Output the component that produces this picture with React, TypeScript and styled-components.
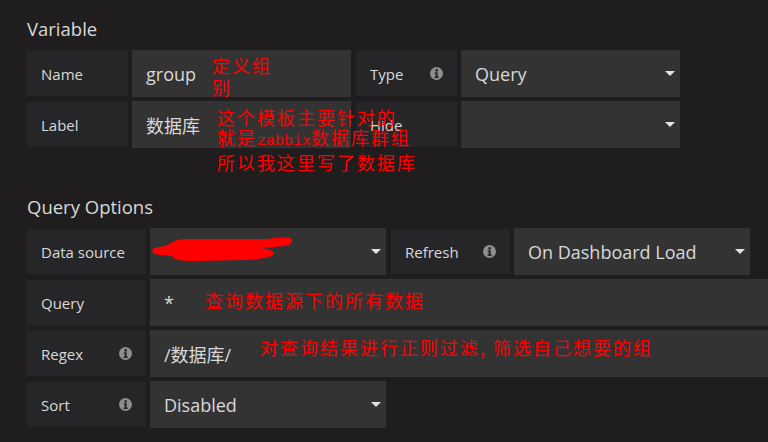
import React from "react";
import styled, { createGlobalStyle } from "styled-components";

const GlobalStyle = createGlobalStyle`
  body {
    margin: 0;
    background: #1f1d1d;
    font-family: "Open Sans", "Noto Sans CJK SC", sans-serif;
    overflow: hidden;
  }
`

const InfoIcon = () => (
  <svg width="13" height="13" viewBox="0 0 13 13">
    <circle cx="6.5" cy="6.5" r="6.5" fill="#8e8e8e" />
    <circle cx="6.7" cy="3.4" r="1.3" fill="#262628" />
    <path d="M4.6 5.3h3.1v4.3h1v1.3H4.6V9.6h1V6.6h-1z" fill="#262628" />
  </svg>
);

const Scribble = () => (
  <ScribbleSvg width="150" height="40" viewBox="0 0 150 40">
    <path
      d="M3 21 C1 24 4 27 10 27 L22 28 C24 32 30 33 45 33 L95 32 C110 31 122 30 124 26 C125 23 118 21 112 20 L135 18 C142 17 144 12 140 10 C132 9 125 10 117 11 L40 11 C30 11 24 12 20 16 L10 19 C6 19 4 20 3 21 Z"
      fill="#ff0000"
    />
  </ScribbleSvg>
);

const App = () => {
  return (
    <Page>
      <GlobalStyle />
      <Section>
        <Heading>Variable</Heading>
        <Row>
          <Label $w={101}>Name</Label>
          <Field $w={219}>
            group
            <Note $top={4} $left={80} $lh={22}>{"定义组\n别"}</Note>
          </Field>
          <Label $w={101} $gapLeft>
            Type <InfoIcon />
          </Label>
          <Select $w={219}>Query<Caret /></Select>
        </Row>
        <Row>
          <Label $w={101}>Label</Label>
          <Field $w={219}>
            数据库
            <Note $top={6} $left={85} $lh={20}>
              这个模板主要针对的{"\n"}就是<Latin>zabbix</Latin>数据库群组{"\n"}所以我这里写了数据库
            </Note>
          </Field>
          <Label $w={101} $gapLeft>Hide</Label>
          <Select $w={219}><Caret /></Select>
        </Row>
      </Section>
      <Section>
        <Heading>Query Options</Heading>
        <Row>
          <Label $w={119}>Data source</Label>
          <Select $w={236}>
            <Scribble />
            <Caret />
          </Select>
          <Label $w={119} $gapLeft>
            Refresh <InfoIcon />
          </Label>
          <Select $w={236}>On Dashboard Load<Caret /></Select>
        </Row>
        <Row>
          <Label $w={119}>Query</Label>
          <Field $w={700}>
            *
            <Note $top={11} $left={55} $lh={20}>查询数据源下的所有数据</Note>
          </Field>
        </Row>
        <Row>
          <Label $w={119}>
            Regex <InfoIcon />
          </Label>
          <Field $w={700}>
            /数据库/
            <Note $top={7} $left={110} $lh={20}>对查询结果进行正则过滤, 筛选自己想要的组</Note>
          </Field>
        </Row>
        <Row>
          <Label $w={119}>
            Sort <InfoIcon />
          </Label>
          <Select $w={236}>Disabled<Caret /></Select>
        </Row>
      </Section>
    </Page>
  );
};

const Page = styled.div`
  width: 768px;
  height: 442px;
  box-sizing: border-box;
  padding: 17px 0 0 27px;
  overflow: hidden;
`
const Section = styled.div`
  display: flex;
  flex-direction: column;
  gap: 4px;
  margin-bottom: 47px;
`
const Heading = styled.h3`
  margin: 0 0 5px;
  font-size: 18.5px;
  line-height: 24px;
  font-weight: 400;
  color: #d8d9da;
`
const Row = styled.div`
  display: flex;
  align-items: center;
  gap: 4px;
  height: 47px;
`
const Label = styled.div<{ $w: number; $gapLeft?: boolean }>`
  flex-shrink: 0;
  width: ${p => p.$w}px;
  height: 45px;
  box-sizing: border-box;
  padding: 0 14px;
  margin-left: ${p => (p.$gapLeft ? 1 : 0)}px;
  background: #262628;
  color: #d8d9da;
  font-size: 15px;
  display: flex;
  align-items: center;
  justify-content: space-between;
  svg{
    flex-shrink: 0;
  }
`
const Field = styled.div<{ $w: number }>`
  position: relative;
  flex-shrink: 0;
  width: ${p => p.$w}px;
  height: 47px;
  box-sizing: border-box;
  padding: 0 15px 0 14px;
  background: #333333;
  color: #d8d9da;
  font-size: 18px;
  display: flex;
  align-items: center;
`
const Select = styled(Field)`
  padding-right: 5px;
`
const Caret = styled.span`
  margin-left: auto;
  width: 0;
  height: 0;
  border-left: 5px solid transparent;
  border-right: 5px solid transparent;
  border-top: 5px solid #e3e3e3;
`
const Note = styled.div<{ $top: number; $left: number; $lh: number }>`
  position: absolute;
  z-index: 5;
  top: ${p => p.$top}px;
  left: ${p => p.$left}px;
  color: #ff0000;
  font-family: "Noto Sans CJK SC", sans-serif;
  font-size: 18px;
  letter-spacing: 2px;
  line-height: ${p => p.$lh}px;
  white-space: pre;
  pointer-events: none;
`
const Latin = styled.span`
  font-family: "Liberation Mono", monospace;
  font-size: 15px;
  letter-spacing: 0;
`
const ScribbleSvg = styled.svg`
  position: absolute;
  left: 0;
  top: 0;
`

export default App;
